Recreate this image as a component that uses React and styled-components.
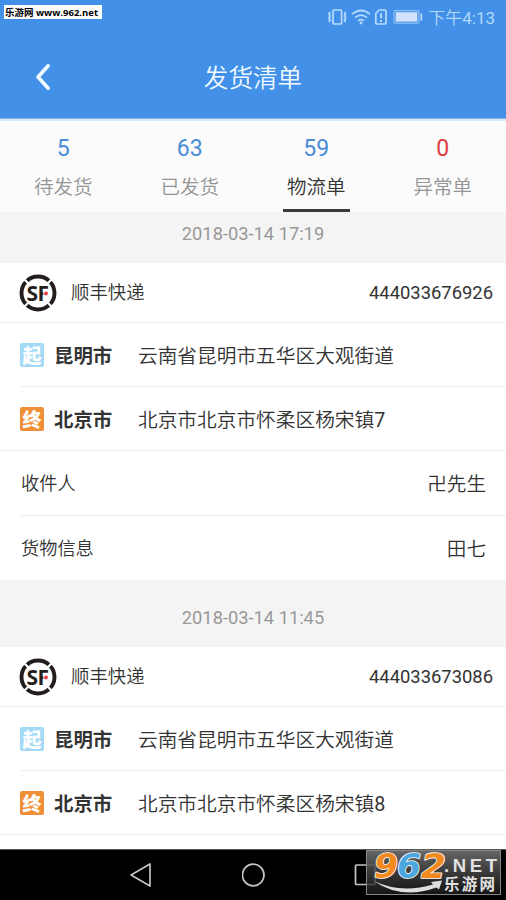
import React from "react"
import styled, { createGlobalStyle } from "styled-components";

const GlobalStyle = createGlobalStyle`
    * { box-sizing:border-box; }
    body {
        margin:0;
        background:black;
        font-family:Roboto, "Noto Sans CJK SC", sans-serif;
    }
`

const Screen = styled.div`
    position:relative;
    display:flex;
    flex-direction:column;
    width:506px;
    height:900px;
    overflow:hidden;
    background:white;
`

const Header = styled.header`
    flex:none;
    height:121px;
    background:#4390e8;
    border-bottom:2px solid #d5e8f5;
    box-shadow:inset 0 -1px 0 #87b4e4;
`

const StatusBar = styled.div`
    display:flex;
    align-items:center;
    justify-content:flex-end;
    height:35px;
    padding-right:11px;
    color:#b5dcff;
`

const StatusIcons = styled.svg`
    display:block;
    width:96px;
    height:18px;
    margin-right:5px;
    margin-bottom:1px;
`

const Clock = styled.span`
    font-size:17px;
    line-height:20px;
    font-weight:350;
    color:#b0d8fc;
    white-space:nowrap;
`

const Digits = styled.span`
    font-weight:400;
`

const TitleBar = styled.div`
    display:grid;
    grid-template-columns:86px 1fr 86px;
    align-items:center;
    height:84px;
`

const BackIcon = styled.svg`
    width:16px;
    height:28px;
    margin-left:35px;
`

const Title = styled.h1`
    margin:4px 0 0;
    text-align:center;
    color:#f0fbff;
    font-size:24.6px;
    line-height:30px;
    font-weight:350;
`

const Tabs = styled.nav`
    flex:none;
    display:grid;
    grid-template-columns:repeat(4, 1fr);
    height:91px;
    background:#fbfbfb;
`

const Tab = styled.div`
    display:flex;
    flex-direction:column;
    align-items:center;
`

const TabCount = styled.div`
    margin-top:13px;
    font-size:23px;
    line-height:30px;
    color:${props => props.$alert ? "#dc3c3f" : "#4a8cd6"};
`

const TabLabel = styled.div`
    display:flex;
    justify-content:center;
    width:67px;
    height:48px;
    padding-top:8px;
    font-size:19.5px;
    line-height:32px;
    font-weight:350;
    white-space:nowrap;
    color:${props => props.$active ? "#333" : "#949494"};
    border-bottom:3px solid ${props => props.$active ? "#383c3a" : "transparent"};
`

const OrderList = styled.main`
    flex:1;
    min-height:0;
    overflow:hidden;
`

const DateBand = styled.div`
    height:${props => props.$first ? "51px" : "67px"};
    padding-top:${props => props.$first ? "10px" : "26px"};
    background:#f4f4f4;
    color:#999;
    text-align:center;
    font-size:18.3px;
    line-height:24px;
`

const Row = styled.div`
    display:flex;
    align-items:center;
    height:${props => props.$height || 64}px;
    margin-left:${props => props.$inset ? "21px" : "0"};
    padding-left:${props => props.$inset ? "0" : "21px"};
    padding-right:${props => props.$right || 20}px;
    border-top:${props => props.$plain ? "none" : "1px solid #ededed"};
    color:#333;
    white-space:nowrap;
`

const Logo = styled.svg`
    width:38px;
    height:38px;
    margin-left:-2px;
`

const Carrier = styled.span`
    flex:1;
    margin-left:14px;
    padding-top:1px;
    font-size:18.4px;
    line-height:28px;
    font-weight:350;
`

const TrackingNumber = styled.span`
    font-size:18.4px;
`

const PlaceBadge = styled.span`
    width:24px;
    height:24px;
    margin-left:-1px;
    border-radius:2px;
    background:${props => props.$color};
    color:white;
    font-size:19px;
    line-height:27px;
    font-weight:900;
    text-align:center;
`

const City = styled.span`
    width:84px;
    margin-left:10px;
    font-size:19.4px;
    font-weight:700;
`

const Address = styled.span`
    font-size:19.7px;
    font-weight:350;
`

const Label = styled.span`
    flex:1;
    margin-bottom:2px;
    font-size:18.2px;
    font-weight:350;
`

const Value = styled.span`
    margin-bottom:2px;
    font-size:19.6px;
    font-weight:350;
`

const NavBar = styled.footer`
    flex:none;
    display:flex;
    align-items:center;
    height:51px;
    background:black;
    border-top:1px solid #555;
    padding-left:130px;
    gap:88px;
`

const NavIcon = styled.svg`
    width:24px;
    height:24px;
    fill:none;
    stroke:#c4c4c4;
    stroke-width:1.7;
`

const SiteTag = styled.div`
    position:absolute;
    left:4px;
    top:5px;
    width:98px;
    height:14px;
    padding-left:1px;
    background:white;
    color:black;
    font-family:"Open Sans", "Noto Sans CJK SC", sans-serif;
    font-size:9.5px;
    line-height:15px;
    font-weight:700;
    white-space:nowrap;
`

const SiteLogo = styled.svg`
    position:absolute;
    left:366px;
    top:850px;
    width:135px;
    height:45px;
`

const tabs = [
    { count: 5, label: "待发货" },
    { count: 63, label: "已发货" },
    { count: 59, label: "物流单", active: true },
    { count: 0, label: "异常单", alert: true },
]

const orders = [
    {
        date: "2018-03-14 17:19",
        number: "444033676926",
        to: "北京市北京市怀柔区杨宋镇",
        door: "7",
        receiver: "卍先生",
        goods: "田七",
    },
    {
        date: "2018-03-14 11:45",
        number: "444033673086",
        to: "北京市北京市怀柔区杨宋镇",
        door: "8",
    },
]

const PhoneStatus = () => (
    <StatusBar>
        <StatusIcons viewBox="0 0 96 18" fill="none" stroke="currentColor" strokeWidth="1.7">
            <rect x="6" y="2" width="8.6" height="14" rx="1" />
            <path d="M3.2 4l-1.3 2 1.3 2-1.3 2 1.3 2-1.3 2M17.4 4l1.3 2-1.3 2 1.3 2-1.3 2 1.3 2" />
            <path d="M25 6.2q9-7.4 18 0M28 9.6q6-4.9 12 0M31 12.8q3-2.4 6 0" />
            <circle cx="34" cy="15" r="1.4" fill="currentColor" stroke="none" />
            <path d="M48.8 5.5L52 2h6q1 0 1 1v12q0 1-1 1h-8.2q-1 0-1-1z" />
            <path d="M54 5.2v5M54 12v2" strokeWidth="1.9" />
            <rect x="67" y="2.7" width="25" height="12.4" rx="1.4" stroke="#8fc1f5" strokeWidth="1.2" />
            <rect x="68.7" y="4.2" width="21.6" height="9.4" fill="#d3e3fb" stroke="none" />
            <path d="M94.3 5.5v7" />
        </StatusIcons>
        <Clock>下午<Digits>4:13</Digits></Clock>
    </StatusBar>
)

const SfLogo = () => (
    <Logo viewBox="0 0 38 38">
        <circle cx="19" cy="19" r="16.5" fill="none" stroke="#231e1c" strokeWidth="3.9" />
        <path d="M4 4l6.5 6.5M34 4l-6.5 6.5M4 34l6.5-6.5M34 34l-6.5-6.5" stroke="white" strokeWidth="2.2" />
        <g fontFamily="Open Sans, sans-serif" fontWeight="700" fontSize="21" fill="#231e1c">
            <text x="7.6" y="26.6">S</text>
            <text x="18.4" y="26.6">F</text>
        </g>
        <circle cx="27" cy="19.4" r="2.8" fill="white" />
        <circle cx="27" cy="19.4" r="2" fill="#df4050" />
    </Logo>
)

const Order = ({ order, first }) => (
    <section>
        <DateBand $first={first}>{order.date}</DateBand>
        <Row $plain $height={59} $right={13}>
            <SfLogo />
            <Carrier>顺丰快递</Carrier>
            <TrackingNumber>{order.number}</TrackingNumber>
        </Row>
        <Row>
            <PlaceBadge $color="#a3daf6">起</PlaceBadge>
            <City>昆明市</City>
            <Address>云南省昆明市五华区大观街道</Address>
        </Row>
        <Row $inset>
            <PlaceBadge $color="#f08f38">终</PlaceBadge>
            <City>北京市</City>
            <Address>{order.to}<Digits>{order.door}</Digits></Address>
        </Row>
        {order.receiver ? (
            <>
                <Row $height={65}>
                    <Label>收件人</Label>
                    <Value>{order.receiver}</Value>
                </Row>
                <Row $inset $height={65}>
                    <Label>货物信息</Label>
                    <Value>{order.goods}</Value>
                </Row>
            </>
        ) : <Row />}
    </section>
)

const PhoneNav = () => (
    <NavBar>
        <NavIcon viewBox="0 0 24 24"><path d="M1 12L20 .9v22.2z" strokeLinejoin="round" /></NavIcon>
        <NavIcon viewBox="0 0 24 24"><circle cx="11.2" cy="12" r="10.8" /></NavIcon>
        <NavIcon viewBox="0 0 24 24"><rect x="1.5" y="2" width="19.5" height="19.5" rx="1" /></NavIcon>
    </NavBar>
)

const Watermark = () => (
    <SiteLogo viewBox="0 0 135 45">
        <defs>
            <linearGradient id="plate" x1="0" y1="0" x2="0" y2="1">
                <stop offset="0" stopColor="#6c6c6c" stopOpacity=".95" />
                <stop offset="1" stopColor="#1c1c1c" stopOpacity=".75" />
            </linearGradient>
        </defs>
        <rect x=".5" y=".5" width="134" height="44" fill="url(#plate)" stroke="#888" />
        <path d="M8 31Q35 44 67 34.5l-2-2.5 11-1.5-3 9-2.5-2Q35 50 8 31z" fill="#dedede" />
        <g fontFamily="DejaVu Sans, sans-serif" fontWeight="700" fontStyle="italic" fontSize="33" stroke="white" strokeWidth="1.6" paintOrder="stroke" strokeLinejoin="round">
            <text x="8" y="28" fill="#f28a20" textLength="24" lengthAdjust="spacingAndGlyphs">9</text>
            <text x="31" y="28" fill="#4da7df" textLength="24" lengthAdjust="spacingAndGlyphs">6</text>
            <text x="55" y="28" fill="#f28a20" textLength="25" lengthAdjust="spacingAndGlyphs">2</text>
        </g>
        <text x="78" y="22" fill="#e2e2e2" fontFamily="Liberation Sans, Arial, sans-serif" fontWeight="700" fontSize="18.5" textLength="53">.NET</text>
        <text x="78" y="40" fill="#e2e2e2" fontFamily="Noto Sans CJK SC, sans-serif" fontWeight="700" fontSize="15.5" textLength="51">乐游网</text>
    </SiteLogo>
)

const App = () => {
    return (
        <Screen>
            <GlobalStyle />
            <Header>
                <PhoneStatus />
                <TitleBar>
                    <BackIcon viewBox="0 0 16 28" fill="none" stroke="#f0fbff" strokeWidth="3.6" strokeLinecap="round" strokeLinejoin="round">
                        <path d="M13.2 2.8L3 14l10.2 11.2" />
                    </BackIcon>
                    <Title>发货清单</Title>
                </TitleBar>
            </Header>
            <Tabs>
                {tabs.map(tab => (
                    <Tab key={tab.label}>
                        <TabCount $alert={tab.alert}>{tab.count}</TabCount>
                        <TabLabel $active={tab.active}>{tab.label}</TabLabel>
                    </Tab>
                ))}
            </Tabs>
            <OrderList>
                {orders.map((order, i) => (
                    <Order key={order.number} order={order} first={i === 0} />
                ))}
            </OrderList>
            <PhoneNav />
            <SiteTag>乐游网 www.962.net</SiteTag>
            <Watermark />
        </Screen>
    );
};

export default App;
